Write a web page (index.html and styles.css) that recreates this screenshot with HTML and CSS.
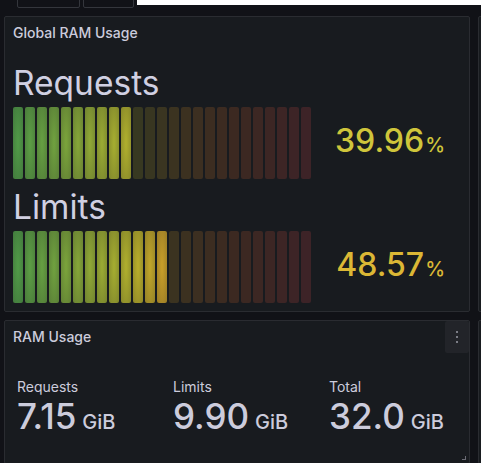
FILE: index.html
```html
<!DOCTYPE html>
<html>
<head>
<meta charset="utf-8">
<link rel="stylesheet" href="styles.css">
</head>
<body>
<div class="topbar">
  <div class="tb-btn tb-btn-a"></div>
  <div class="tb-btn tb-btn-b"></div>
  <div class="tb-white"></div>
</div>
<div class="grid">
  <section class="panel">
    <header class="panel-header"><h2 class="panel-title">Global RAM Usage</h2></header>
    <div class="gauge-body">
      <div class="gauge-row">
        <div class="gauge-label">Requests</div>
        <div class="gauge-line">
          <div class="cells">
            <span class="cell lit" style="--c:86,166,75"></span>
            <span class="cell lit" style="--c:98,169,72"></span>
            <span class="cell lit" style="--c:109,171,69"></span>
            <span class="cell lit" style="--c:120,173,66"></span>
            <span class="cell lit" style="--c:132,176,62"></span>
            <span class="cell lit" style="--c:143,178,59"></span>
            <span class="cell lit" style="--c:155,181,56"></span>
            <span class="cell lit" style="--c:166,183,53"></span>
            <span class="cell lit" style="--c:178,186,50"></span>
            <span class="cell lit" style="--c:189,188,47"></span>
            <span class="cell" style="--c:199,187,44"></span>
            <span class="cell" style="--c:207,178,43"></span>
            <span class="cell" style="--c:215,170,42"></span>
            <span class="cell" style="--c:222,162,40"></span>
            <span class="cell" style="--c:225,151,41"></span>
            <span class="cell" style="--c:226,139,42"></span>
            <span class="cell" style="--c:226,128,43"></span>
            <span class="cell" style="--c:227,116,44"></span>
            <span class="cell" style="--c:228,105,45"></span>
            <span class="cell" style="--c:229,99,51"></span>
            <span class="cell" style="--c:229,93,57"></span>
            <span class="cell" style="--c:230,88,63"></span>
            <span class="cell" style="--c:231,82,68"></span>
            <span class="cell" style="--c:231,76,74"></span>
            <span class="cell" style="--c:232,70,80"></span>
          </div>
          <div class="gauge-value val-req">39.96<span class="pct">%</span></div>
        </div>
      </div>
      <div class="gauge-row">
        <div class="gauge-label">Limits</div>
        <div class="gauge-line">
          <div class="cells">
            <span class="cell lit" style="--c:86,166,75"></span>
            <span class="cell lit" style="--c:98,169,72"></span>
            <span class="cell lit" style="--c:109,171,69"></span>
            <span class="cell lit" style="--c:120,173,66"></span>
            <span class="cell lit" style="--c:132,176,62"></span>
            <span class="cell lit" style="--c:143,178,59"></span>
            <span class="cell lit" style="--c:155,181,56"></span>
            <span class="cell lit" style="--c:166,183,53"></span>
            <span class="cell lit" style="--c:178,186,50"></span>
            <span class="cell lit" style="--c:189,188,47"></span>
            <span class="cell lit" style="--c:199,187,44"></span>
            <span class="cell lit" style="--c:207,178,43"></span>
            <span class="cell lit" style="--c:215,170,42"></span>
            <span class="cell" style="--c:222,162,40"></span>
            <span class="cell" style="--c:225,151,41"></span>
            <span class="cell" style="--c:226,139,42"></span>
            <span class="cell" style="--c:226,128,43"></span>
            <span class="cell" style="--c:227,116,44"></span>
            <span class="cell" style="--c:228,105,45"></span>
            <span class="cell" style="--c:229,99,51"></span>
            <span class="cell" style="--c:229,93,57"></span>
            <span class="cell" style="--c:230,88,63"></span>
            <span class="cell" style="--c:231,82,68"></span>
            <span class="cell" style="--c:231,76,74"></span>
            <span class="cell" style="--c:232,70,80"></span>
          </div>
          <div class="gauge-value val-lim">48.57<span class="pct">%</span></div>
        </div>
      </div>
    </div>
  </section>
  <section class="panel"></section>
  <section class="panel panel-stat">
    <header class="panel-header">
      <h2 class="panel-title">RAM Usage</h2>
      <button class="menu-btn" aria-label="Menu"><span></span><span></span><span></span></button>
    </header>
    <div class="stats">
      <div class="stat">
        <div class="stat-label">Requests</div>
        <div class="stat-value">7.15<span class="unit">GiB</span></div>
      </div>
      <div class="stat">
        <div class="stat-label">Limits</div>
        <div class="stat-value">9.90<span class="unit">GiB</span></div>
      </div>
      <div class="stat">
        <div class="stat-label">Total</div>
        <div class="stat-value">32.0<span class="unit">GiB</span></div>
      </div>
    </div>
    <div class="resize-handle"></div>
  </section>
  <section class="panel"></section>
</div>
</body>
</html>
```
FILE: styles.css
```css
* { box-sizing: border-box; }
html, body {
  margin: 0;
  padding: 0;
  background: #111217;
  overflow: hidden;
  font-family: "Inter", "Noto Sans", sans-serif;
  color: #ccccdc;
}
.topbar {
  height: 16px;
  display: flex;
  align-items: flex-start;
  overflow: hidden;
}
.tb-btn {
  height: 32px;
  margin-top: -24px;
  border: 1px solid #34363c;
  border-radius: 2px;
  flex: none;
}
.tb-btn-a { width: 63px; margin-left: 17px; }
.tb-btn-b { width: 51px; margin-left: 3px; }
.tb-white {
  margin-left: auto;
  width: 344px;
  height: 5px;
  background: #ffffff;
}
.grid {
  display: grid;
  grid-template-columns: 466px 466px;
  grid-template-rows: 296px 144px;
  gap: 8px;
  padding-left: 4px;
}
.panel {
  position: relative;
  background: #181b1f;
  border: 1px solid #2a2c31;
  border-radius: 2px;
  overflow: hidden;
}
.panel-header {
  height: 32px;
  padding: 0 8px;
  display: flex;
  align-items: center;
}
.panel-title {
  margin: 0;
  font-size: 14px;
  font-weight: 500;
  line-height: 32px;
  color: #ccccdc;
}
.gauge-body {
  padding: 6px 8px 8px;
}
.gauge-label {
  height: 52px;
  display: flex;
  align-items: flex-end;
  padding-bottom: 4px;
  font-size: 33.5px;
  line-height: 40px;
  font-weight: 400;
  color: #d0d0e2;
}
.gauge-line {
  display: flex;
  align-items: center;
  height: 72px;
}
.cells {
  display: flex;
  gap: 2px;
  height: 72px;
}
.cell {
  width: 10px;
  height: 72px;
  border-radius: 2px;
  background: rgba(var(--c), 0.18);
}
.cell.lit {
  background: radial-gradient(rgba(var(--c), 0.9) 10%, rgba(var(--c), 0.68));
}
.gauge-value {
  flex: 1;
  text-align: right;
  padding-right: 16px;
  font-size: 32px;
  line-height: 40px;
  font-weight: 500;
  white-space: nowrap;
}
.pct { font-size: 20px; margin-left: 1px; }
.val-req { color: #cfc53b; }
.val-lim { color: #dbb735; }
.panel-stat .panel-header { justify-content: space-between; padding-right: 0; }
.menu-btn {
  width: 24px;
  height: 32px;
  margin-top: -1px;
  border: none;
  border-radius: 2px;
  background: #222429;
  padding: 0;
  display: flex;
  flex-direction: column;
  align-items: center;
  justify-content: center;
  gap: 3px;
}
.menu-btn span {
  width: 2px;
  height: 2px;
  border-radius: 1px;
  background: #9a9ba6;
}
.stats {
  display: grid;
  grid-template-columns: 156px 156px 156px;
  padding: 26px 0 0 12px;
}
.stat-label {
  font-size: 14px;
  line-height: 16px;
  font-weight: 400;
  color: #ccccdc;
}
.stat-value {
  margin-top: 3px;
  font-size: 35px;
  line-height: 36px;
  font-weight: 500;
  color: #ccccdc;
  white-space: nowrap;
}
.unit { font-size: 20px; margin-left: 6px; }
.resize-handle {
  position: absolute;
  right: 3px;
  bottom: 3px;
  width: 4px;
  height: 4px;
  border-right: 1px solid #6b6c75;
  border-bottom: 1px solid #6b6c75;
}
```
